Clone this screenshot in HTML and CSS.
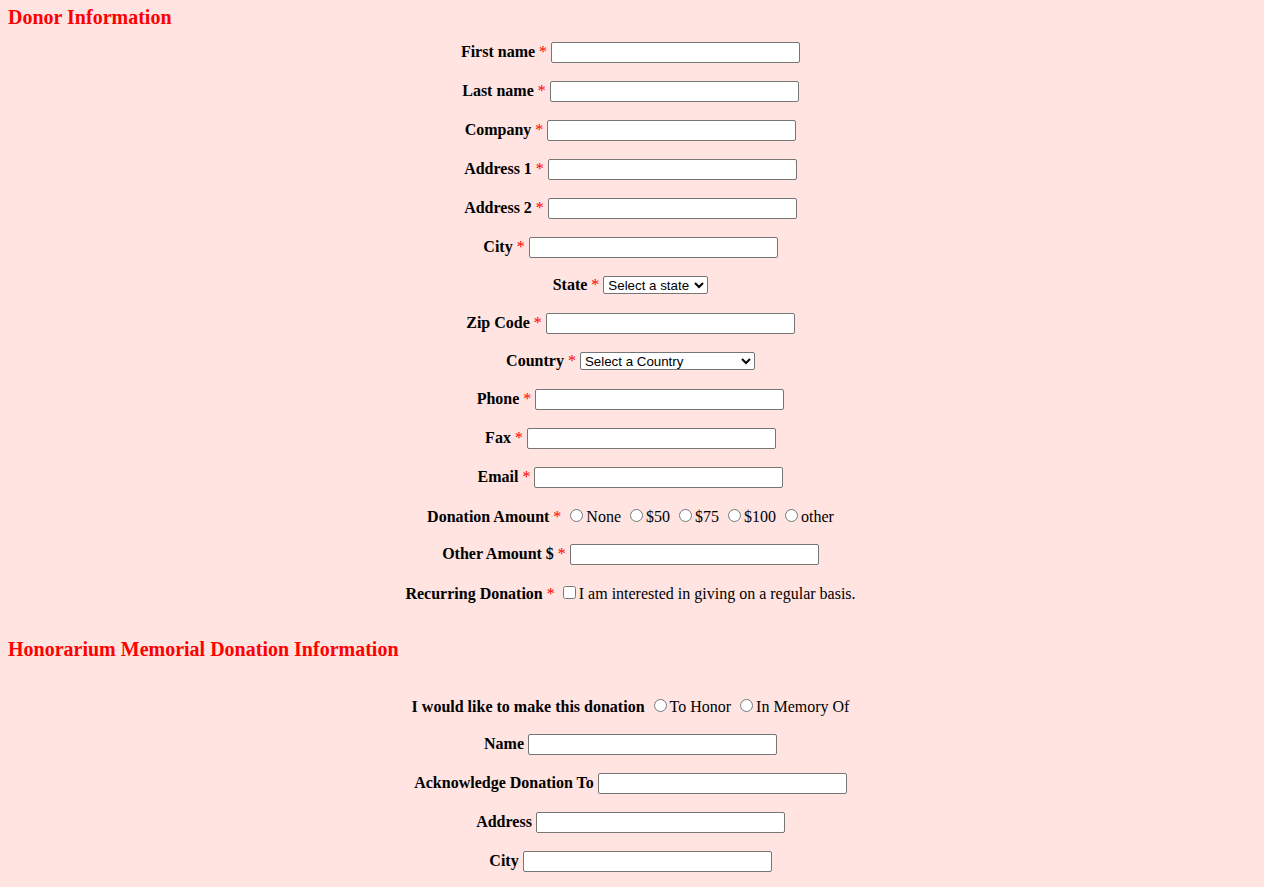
FILE: index.html
```html
<!DOCTYPE html>
<html>
<head>
<meta charset="utf-8">
<title>Donation Form</title>
<link rel="stylesheet" href="styles.css">
</head>
<body>
<form class="donation-form">
  <h3 class="section-title first">Donor Information</h3>
  <p class="row"><label class="lbl">First name <span class="req">*</span></label> <input type="text" class="field"></p>
  <p class="row"><label class="lbl">Last name <span class="req">*</span></label> <input type="text" class="field"></p>
  <p class="row"><label class="lbl">Company <span class="req">*</span></label> <input type="text" class="field"></p>
  <p class="row"><label class="lbl">Address 1 <span class="req">*</span></label> <input type="text" class="field"></p>
  <p class="row"><label class="lbl">Address 2 <span class="req">*</span></label> <input type="text" class="field"></p>
  <p class="row"><label class="lbl">City <span class="req">*</span></label> <input type="text" class="field"></p>
  <p class="row"><label class="lbl">State <span class="req">*</span></label> <select class="sel sel-state"><option>Select a state</option></select></p>
  <p class="row"><label class="lbl">Zip Code <span class="req">*</span></label> <input type="text" class="field"></p>
  <p class="row"><label class="lbl">Country <span class="req">*</span></label> <select class="sel sel-country"><option>Select a Country</option></select></p>
  <p class="row"><label class="lbl">Phone <span class="req">*</span></label> <input type="text" class="field"></p>
  <p class="row"><label class="lbl">Fax <span class="req">*</span></label> <input type="text" class="field"></p>
  <p class="row"><label class="lbl">Email <span class="req">*</span></label> <input type="text" class="field"></p>
  <p class="row"><label class="lbl">Donation Amount <span class="req">*</span></label> <input type="radio" name="amt" class="radio">None <input type="radio" name="amt" class="radio">$50 <input type="radio" name="amt" class="radio">$75 <input type="radio" name="amt" class="radio">$100 <input type="radio" name="amt" class="radio">other</p>
  <p class="row"><label class="lbl">Other Amount $ <span class="req">*</span></label> <input type="text" class="field"></p>
  <p class="row"><label class="lbl">Recurring Donation <span class="req">*</span></label> <input type="checkbox" class="check">I am interested in giving on a regular basis.</p>

  <h3 class="section-title second">Honorarium Memorial Donation Information</h3>
  <p class="row"><label class="lbl">I would like to make this donation</label> <input type="radio" name="kind" class="radio">To Honor <input type="radio" name="kind" class="radio">In Memory Of</p>
  <p class="row"><label class="lbl">Name</label> <input type="text" class="field"></p>
  <p class="row"><label class="lbl">Acknowledge Donation To</label> <input type="text" class="field"></p>
  <p class="row"><label class="lbl">Address</label> <input type="text" class="field"></p>
  <p class="row"><label class="lbl">City</label> <input type="text" class="field"></p>
</form>
</body>
</html>
```
FILE: styles.css
```css
html {
  background: #ffe4e1;
}
body {
  margin: 8px;
  font-family: "Liberation Serif", "Times New Roman", serif;
  font-size: 16px;
  color: #000;
  background: #ffe4e1;
}
.donation-form {
  margin: 0;
}
.section-title {
  color: #ff0000;
  font-size: 20px;
  font-weight: bold;
  margin: 0;
}
.section-title.first {
  margin-top: -2.5px;
  margin-bottom: -4px;
}
.section-title.second {
  margin-top: 34px;
  margin-bottom: 34px;
}
.row {
  text-align: center;
  margin: 16px 0;
  padding: 1px 3px 1px 0;
}
.lbl {
  font-weight: bold;
}
.req {
  color: #ff0000;
  font-weight: normal;
}
.field {
  box-sizing: border-box;
  width: 249px;
  height: 21px;
  font-family: "Liberation Sans", Arial, sans-serif;
  font-size: 13.333px;
  border: 1px solid #767676;
  border-radius: 2px;
  background: #fff;
  padding: 1px 2px;
  margin: 0;
}
.sel {
  font-family: "Liberation Sans", Arial, sans-serif;
  font-size: 13.333px;
  height: 18px;
  margin: 0 0 1px 0;
  border: 1px solid #767676;
  border-radius: 2px;
  background: #fff;
  color: #000;
}
.sel-state {
  width: 105px;
}
.sel-country {
  width: 175px;
}
.radio {
  margin: 3px 3px 0 5px;
}
.check {
  margin: 3px 3px 3px 4px;
}
```
